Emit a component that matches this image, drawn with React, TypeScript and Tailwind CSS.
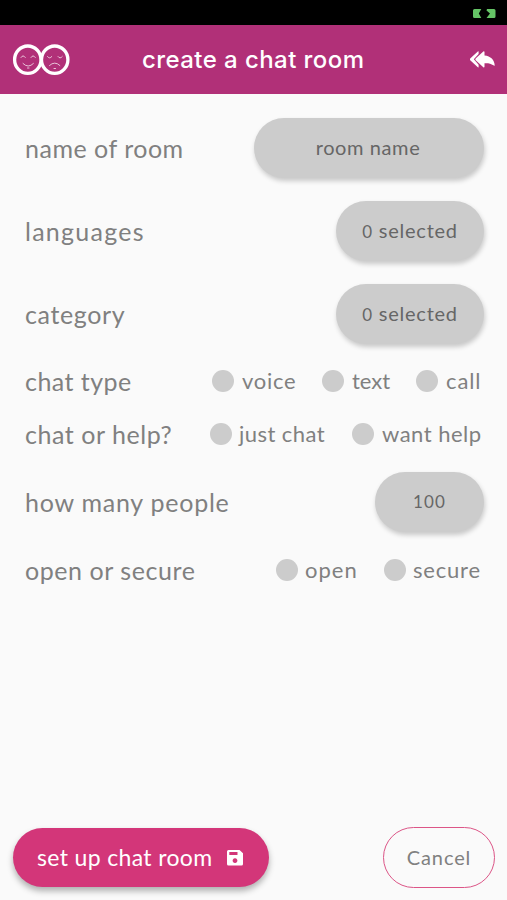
import clsx from 'clsx';

type PillProps = {
  className?: string;
  children: React.ReactNode;
};

const Pill = ({ className, children }: PillProps) => (
  <button
    className={clsx(
      'flex h-[60px] items-center justify-center rounded-full bg-[#cccccc] pb-[2px] text-[20px] text-[#666666] shadow-[1px_3px_5px_rgba(0,0,0,0.2)]',
      className,
    )}
  >
    {children}
  </button>
);

// number is drawn at x-height, like old-style figures
const SelectedCount = ({ count }: { count: number }) => (
  <span className="flex items-baseline tracking-[0.75px]">
    <span className="mr-[6px] text-[17px]">{count}</span>
    <span>selected</span>
  </span>
);

type OptionProps = {
  label: string;
  className: string;
  textClass: string;
};

const Option = ({ label, className, textClass }: OptionProps) => (
  <label className={clsx('flex items-center', className)}>
    <span className="h-[22px] w-[22px] shrink-0 rounded-full bg-[#cccccc]" />
    <span className={clsx('whitespace-nowrap pb-px text-[22px] leading-[28px]', textClass)}>{label}</span>
  </label>
);

type RowProps = {
  label: string;
  className: string;
  labelClass: string;
  children: React.ReactNode;
};

const Row = ({ label, className, labelClass, children }: RowProps) => (
  <div className={clsx('flex items-center justify-between pl-[25px]', className)}>
    <span className={clsx('whitespace-nowrap text-[25px] leading-[30px]', labelClass)}>{label}</span>
    <div className="flex items-center">{children}</div>
  </div>
);

const Logo = () => (
  <svg width="58" height="32" viewBox="0 0 58 32" fill="none" stroke="white" strokeLinecap="round">
    <ellipse cx="15.8" cy="15.700" rx="13.200" ry="13.700" strokeWidth="3.300" />
    <ellipse cx="42.700" cy="15.700" rx="13.200" ry="13.700" strokeWidth="3.300" />
    {/* happy face */}
    <g strokeWidth="0.9" opacity="0.8">
      <path d="M9 13.500q2-3.400 4.300 0M19 13.500q2-3.400 4.300 0" />
      <path d="M11 19.500q5.200 5.300 10.400 0M15.500 24h1.500" />
    </g>
    {/* sad face */}
    <g strokeWidth="0.9" opacity="0.8">
      <path d="M35.500 12.500q2 3 4.300 0M46 12.500q2 3 4.300 0" />
      <path d="M37.500 21.500q5.200-5 10.400 0M42 24.500h1.500" />
    </g>
  </svg>
);

const Battery = () => (
  <svg width="23" height="9" viewBox="0 0 23 9" fill="#65c466">
    <path d="M1.500 0H8.300L5.800 4.500 8.300 9H1.500Q0 9 0 7.500V1.500Q0 0 1.500 0Z" />
    <path d="M14 0H21Q22.500 0 22.500 1.500V7.500Q22.500 9 21 9H13.500L17 4.500 13.500 1.500Z" />
  </svg>
);

const ReplyAllIcon = () => (
  <svg width="25" height="17" viewBox="0 0 25 17" fill="white">
    <path d="M8.600.3V3L3.800 8.300 8.600 13.700V16.500L7.800 16.300.2 9.200Q-.3 8.400.2 7.600L7.800.5Z" />
    <path d="M13.300.4Q14.400-.1 14.500 1V4.600C20.500 5 24.600 9.200 24.700 14.400Q24.300 15.200 23.400 14.300C21 12.400 18 12 14.500 12.200V15.700Q14.300 16.800 13.300 16.200L5.700 9.200Q5 8.400 5.700 7.500Z" />
  </svg>
);

const SaveIcon = () => (
  <svg width="16" height="16" viewBox="0 0 16 16" fill="white" fillRule="evenodd">
    <path d="M1.500 0H12.500L16 3.300V14Q16 15.500 14.500 15.500H1.500Q0 15.500 0 14V1.500Q0 0 1.500 0ZM2.300 2V5H10.500V2ZM8 8.200a2.400 2.400 0 1 0 .01 0Z" />
  </svg>
);

const App = () => {
  return (
    <div className="flex h-[900px] w-[507px] flex-col overflow-hidden bg-[#fafafa] font-['Lato',sans-serif] text-[#808080]">
      <div className="flex h-[25px] shrink-0 items-center justify-end bg-black pr-[11px] pt-[2px]">
        <Battery />
      </div>

      <header className="flex h-[69px] shrink-0 items-center bg-[#b13078] pl-[12px] pr-[12px] text-white">
        <Logo />
        <h1 className="ml-[72px] whitespace-nowrap font-['Inter',sans-serif] text-[24px] font-medium tracking-[0.43px]">
          create a chat room
        </h1>
        <div className="ml-auto">
          <ReplyAllIcon />
        </div>
      </header>

      <main className="flex flex-1 flex-col pr-[23px] pt-[24px]">
        <Row label="name of room" className="h-[60px]" labelClass="pb-px tracking-[0.5px]">
          <Pill className="w-[230px] pr-[2px] tracking-[0.6px]">room name</Pill>
        </Row>
        <Row label="languages" className="mt-[23px] h-[60px]" labelClass="pb-px tracking-[1.25px]">
          <Pill className="w-[148px]">
            <SelectedCount count={0} />
          </Pill>
        </Row>
        <Row label="category" className="mt-[23px] h-[60px]" labelClass="pb-px tracking-[0.63px]">
          <Pill className="w-[148px]">
            <SelectedCount count={0} />
          </Pill>
        </Row>
        <Row label="chat type" className="mt-[22px] h-[30px]" labelClass="tracking-[0.45px]">
          <Option label="voice" className="w-[110px]" textClass="ml-[8px] tracking-[0.7px]" />
          <Option label="text" className="w-[94px]" textClass="ml-[8px]" />
          <Option label="call" className="w-[68px]" textClass="ml-[8px] tracking-[0.9px]" />
        </Row>
        <Row label="chat or help?" className="mt-[23px] h-[30px]" labelClass="pb-px tracking-[0.55px]">
          <Option label="just chat" className="w-[142px]" textClass="ml-[7px] tracking-[0.45px]" />
          <Option label="want help" className="w-[132px]" textClass="ml-[8px] tracking-[0.5px]" />
        </Row>
        <Row label="how many people" className="mt-[23px] h-[60px]" labelClass="pb-px tracking-[0.75px]">
          <Pill className="w-[109px]">
            <span className="pt-[2px] text-[17px] tracking-[1.2px]">100</span>
          </Pill>
        </Row>
        <Row label="open or secure" className="mt-[23px] h-[30px]" labelClass="pb-px tracking-[0.56px]">
          <Option label="open" className="w-[108px]" textClass="ml-[7px] tracking-[1px]" />
          <Option label="secure" className="w-[100px]" textClass="ml-[7px] tracking-[0.8px]" />
        </Row>
      </main>

      <footer className="flex items-center justify-between pb-[12px] pl-[13px] pr-[12px]">
        <button className="flex h-[59px] w-[256px] items-center rounded-full bg-[#d33679] pl-[24px] text-white shadow-[0_4px_6px_rgba(0,0,0,0.3)]">
          <span className="w-[190px] whitespace-nowrap text-left text-[23px] tracking-[0.35px]">set up chat room</span>
          <SaveIcon />
        </button>
        <button className="flex h-[61px] w-[112px] items-center justify-center rounded-full border-[1.5px] border-[#dc5587] pb-[2px] text-[20px] tracking-[0.9px]">
          Cancel
        </button>
      </footer>
    </div>
  );
};

export default App;
